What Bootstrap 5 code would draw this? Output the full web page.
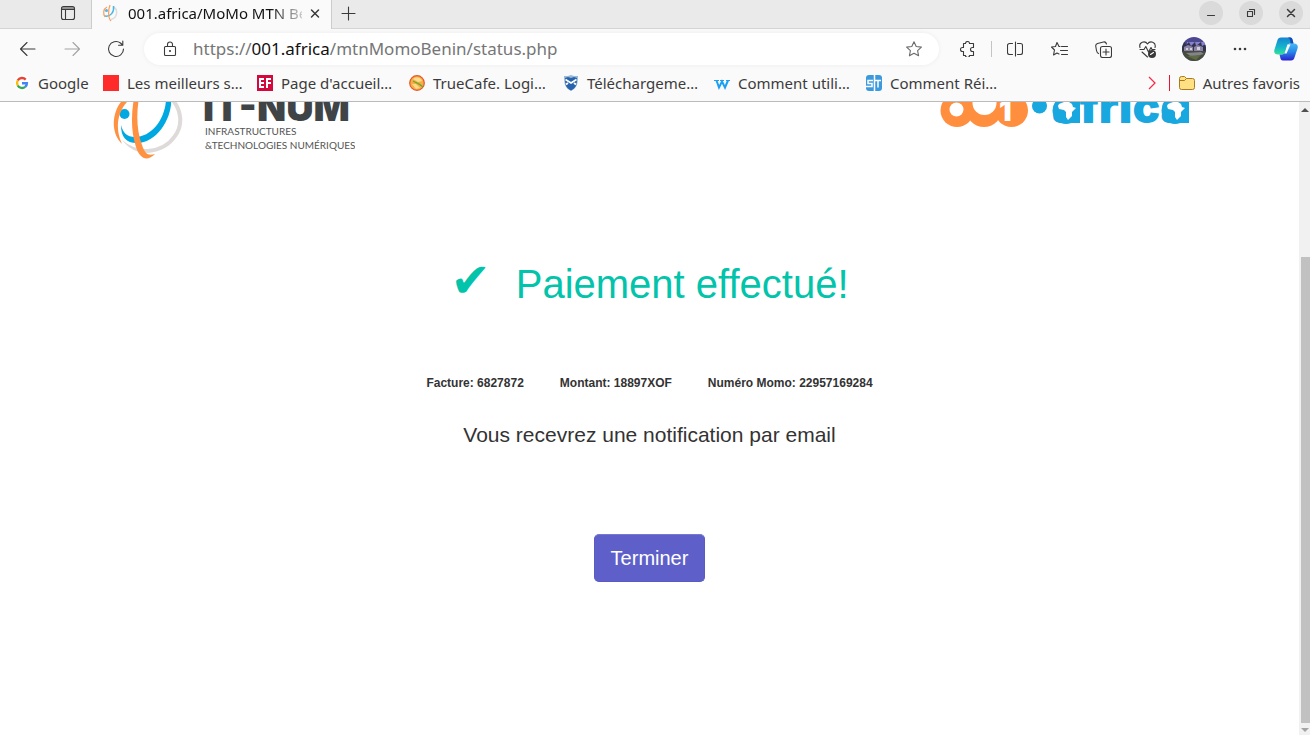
<!DOCTYPE html>
<html lang="fr">
<head>
<meta charset="utf-8">
<meta name="viewport" content="width=device-width, initial-scale=1">
<title>001.africa/MoMo MTN Bénin</title>
<link href="https://cdn.jsdelivr.net/npm/bootstrap@5.3.0/dist/css/bootstrap.min.css" rel="stylesheet">
<style>
  body { font-family: "Liberation Sans", Arial, sans-serif; color: #333; }
  .chrome { font: 15px/20px "Noto Sans", sans-serif; color: #3c3c3c; background: #fafafa; border-bottom: 1px solid #bbb; }
  .chrome button { background: none; border: 0; padding: 0; color: #3a3a3a; display: flex; align-items: center; justify-content: center; flex: none; }
  .chrome svg, .site svg, .scroller svg { display: block; flex: none; }
  .line-art { fill: none; stroke: currentColor; stroke-width: 1.1; stroke-linecap: round; stroke-linejoin: round; }
  .tabs-row { height: 29px; background: #eaeaea; border-bottom: 1px solid #d4d4d4; }
  .tab-menu { width: 46px; margin-left: 45px; height: 26px; }
  .page-tab { width: 241px; height: 29px; padding: 0 8px 3px 10px; background: #fafafa; border: solid #ccc; border-width: 0 1px; color: #111; }
  .tab-title { width: 174px; margin-left: 10px; white-space: nowrap; overflow: hidden; -webkit-mask-image: linear-gradient(90deg, #000 142px, transparent 182px); mask-image: linear-gradient(90deg, #000 142px, transparent 182px); }
  .new-tab { width: 33px; height: 26px; }
  .win-set { padding: 1px 7px 0 0; }
  .chrome .win-btn { width: 24px; height: 24px; border-radius: 50%; background: #dadada; }
  .tools { height: 40px; padding: 0 1px 0 6px; }
  .chrome .tool { width: 44px; height: 32px; }
  .chrome .tool-wide { width: 46px; height: 32px; }
  .account { margin-left: 2px; }
  .address { height: 32px; margin: 0 6px; padding: 0 17px 0 18px; border-radius: 16px; background: #fff; box-shadow: 0 0 5px #0000000f; }
  .url { font-size: 17px; line-height: 24px; color: #767676; margin-left: 15px; outline: 0; white-space: nowrap; }
  .url b { font-weight: 400; color: #111; }
  .tool-rule { width: 1px; height: 16px; background: #c4c4c4; margin: 0 1px 0 2px; }
  .marks-row { height: 32px; padding: 0 10px 4px 14px; }
  .marks { display: grid; grid-template-columns: 89px 154px 152px 154px 151px 152px auto; }
  .chrome a { color: inherit; text-decoration: none; display: flex; align-items: center; gap: 8px; white-space: nowrap; }
  .red-rule { width: 1px; height: 16px; background: #f01030; margin: 0 9px 0 13px; }
  .site-head { padding: 0 109px 0 111px; }
  .paid { font-size: 40px; line-height: 48px; color: #02c4aa; margin-top: 98px; gap: 25px; }
  .paid .tick { font-family: "DejaVu Sans", sans-serif; font-size: 48px; line-height: 40px; }
  .facts { font-size: 12px; line-height: 18px; font-weight: 700; gap: 36px; margin-top: 66px; }
  .notice { font-size: 21px; line-height: 32px; margin: 27px 0 83px; }
  .btn-done { --bs-btn-color: #fff; --bs-btn-bg: #5e5fc8; --bs-btn-border-color: #5a5ac4; --bs-btn-hover-color: #fff; --bs-btn-hover-bg: #5051b8; --bs-btn-border-radius: 5px; border-top-color: #7778d2; }
  .scroller { width: 11px; background: #f1f1f1; padding: 5px 0 3px; }
  .thumb { width: 9px; background: #c1c1c1; margin: 144px 0 5px auto; }
</style>
</head>
<body class="vh-100 d-flex flex-column overflow-hidden bg-white">
<header class="chrome">
  <div class="tabs-row d-flex align-items-start">
    <button class="tab-menu" aria-label="Menu des onglets"><svg class="line-art" width="16" height="16" viewBox="0 0 16 16"><rect x="1.500" y="1.500" width="13" height="13" rx="2"/><path d="M2 4.500h12M2 3h12M5.500 5v9"/></svg></button>
    <div class="page-tab d-flex align-items-center">
      <svg width="16" height="18" viewBox="0 0 16 18" fill="none"><path d="M11 2.500a7 7 0 0 1-2 13" stroke="#ddd" stroke-width="1.500"/><path d="M11.500 2c1 6-3 11-8.500 10" stroke="#4bb8e8" stroke-width="1.500"/><circle cx="4.500" cy="6.500" r="1.500" fill="#4bb8e8"/><path d="M5 3C1 5 1 10 3 13M8 1c-2 5-2 13 1 16" stroke="#f9a05c" stroke-width="1.200"/></svg>
      <span class="tab-title">001.africa/MoMo MTN Bénin</span>
      <button class="ms-auto" aria-label="Fermer l'onglet"><svg class="line-art" width="15" height="16" viewBox="0 0 15 16"><path d="M3.500 5l7 7m0-7l-7 7" stroke-width="1.500"/></svg></button>
    </div>
    <button class="new-tab" aria-label="Nouvel onglet"><svg class="line-art" width="15" height="15" viewBox="0 0 15 15"><path d="M7.500 1v13M1 7.500h13"/></svg></button>
    <div class="d-flex gap-3 ms-auto win-set">
      <button class="win-btn" aria-label="Réduire"><svg class="line-art" width="12" height="12" viewBox="0 0 12 12"><path d="M2.500 8.500h7"/></svg></button>
      <button class="win-btn" aria-label="Restaurer"><svg class="line-art" width="12" height="12" viewBox="0 0 12 12"><path d="M2.500 4.500h5v5h-5zM4.500 2.500h5v5"/></svg></button>
      <button class="win-btn" aria-label="Fermer"><svg class="line-art" width="12" height="12" viewBox="0 0 12 12"><path d="M2.500 2.500l7 7m0-7l-7 7" stroke-width="1.500"/></svg></button>
    </div>
  </div>
  <div class="tools d-flex align-items-center">
    <button class="tool" aria-label="Précédent"><svg class="line-art" width="18" height="16" viewBox="0 0 18 16"><path d="M8 1.500L1.500 8 8 14.500M1.500 8H16"/></svg></button>
    <button class="tool" aria-label="Suivant" disabled><svg class="line-art" width="18" height="16" viewBox="0 0 18 16" opacity=".45"><path d="M10 1.500L16.500 8 10 14.500M16.500 8H2"/></svg></button>
    <button class="tool" aria-label="Actualiser"><svg class="line-art" width="18" height="18" viewBox="0 0 18 18"><path d="M16.500 9a7.500 7.500 0 1 1-3-6l2 2M15.800 1v4.200h-4.200"/></svg></button>
    <div class="address d-flex align-items-center flex-grow-1">
      <svg class="line-art" width="16" height="16" viewBox="0 0 16 16"><rect x="2.500" y="5.500" width="11" height="9" rx="1"/><path d="M5.500 5.500V3.500a2.500 2.500 0 0 1 5 0v2"/><circle cx="8" cy="10" r=".5"/></svg>
      <div class="url flex-grow-1" role="textbox" contenteditable="true" spellcheck="false" aria-label="Adresse">https://<b>001.africa</b>/mtnMomoBenin/status.php</div>
      <button aria-label="Ajouter aux favoris"><svg class="line-art" width="16" height="16" viewBox="0 0 16 16" opacity=".75"><path d="M8 .8l2.200 4.700 5.200.6-3.800 3.500 1 5.200L8 12.200l-4.600 2.600 1-5.200L.6 6.100l5.200-.6z"/></svg></button>
    </div>
    <button class="tool" aria-label="Extensions"><svg class="line-art" width="16" height="16" viewBox="0 0 16 16"><path d="M4.500 2.500h2a2 2 0 0 1 4 0h4v4h-1a1.800 1.800 0 0 0 0 4h1v4h-4a2 2 0 0 1-4 0h-2v-4h-1a2 2 0 1 1 0-4h1z"/></svg></button>
    <span class="tool-rule"></span>
    <button class="tool" aria-label="Écran fractionné"><svg class="line-art" width="16" height="16" viewBox="0 0 16 16"><path d="M5.500 2.500h-3a2 2 0 0 0-2 2v7a2 2 0 0 0 2 2h3M8.500 1v14M10.500 2.500h3a2 2 0 0 1 2 2v7a2 2 0 0 1-2 2h-3"/></svg></button>
    <button class="tool" aria-label="Favoris"><svg class="line-art" width="17" height="16" viewBox="0 0 17 16"><path d="M9 5.500H8L6 1.500l-1.500 4-4 .5L3.500 9l-1 5L6 12l2 1M10.500 5.500h6M9.500 9.500h7M10.500 13.500h6"/></svg></button>
    <button class="tool" aria-label="Collections"><svg class="line-art" width="17" height="17" viewBox="0 0 17 17"><rect x="5.500" y="5.500" width="11" height="11" rx="2"/><path d="M11 8v6M8 11h6M3.500 12.500C2 12 1.800 11 1.500 9.500L.8 5.500C.5 4 1 3 2.500 2.500l6-1.500c1.500-.3 2.500.3 3 2"/></svg></button>
    <button class="tool" aria-label="Performances"><svg class="line-art" width="17" height="17" viewBox="0 0 17 17"><path d="M1 6.500C-.5 1 6-.8 8.500 3 11-.8 17.500 1 16 6.500M1 8.500h4l1.800-3 2.700 5.500L12 6.500l1 2h3M3 11l5.500 5"/><circle cx="13" cy="13" r="4" fill="currentColor" stroke="none"/><path d="M11.500 13.500l3-2" stroke="#fff"/></svg></button>
    <button class="tool-wide account" aria-label="Profil"><svg width="24" height="24" viewBox="0 0 24 24"><defs><clipPath id="round"><circle cx="12" cy="12" r="12"/></clipPath></defs><g clip-path="url(#round)"><path fill="#4b4790" d="M0 0h24v24H0z"/><path fill="#8a80d0" d="M5 5h19v7H5z"/><path fill="#30344a" d="M0 8l3-3 1 3 3-3 2 4 4-4 1 4 5-4 1 4 4-2v8H0z"/><path fill="#8b83a8" d="M2 10l4-2 5 2v4H2zM12 10l4-2 5 2v4h-9z"/><path fill="#d6cbd8" d="M4 11h2v2H4zM8 11h2v2H8zM15 10h3v3h-3z"/><path fill="#454d3d" d="M0 14h24v10H0z"/><path fill="#85828a" d="M4 16l15-1 3 2-12 3z"/><path fill="#5f6b43" d="M5 19l14-1-5 5z"/></g></svg></button>
    <button class="tool-wide" aria-label="Paramètres et plus"><svg width="14" height="4" viewBox="0 0 14 4" fill="currentColor"><circle cx="2" cy="2" r="1.300"/><circle cx="7" cy="2" r="1.300"/><circle cx="12" cy="2" r="1.300"/></svg></button>
    <button class="tool-wide" aria-label="Copilot"><svg width="24" height="24" viewBox="0 0 24 24"><defs><linearGradient id="cg" x2="0" y2="1"><stop stop-color="#1683d0"/><stop offset=".6" stop-color="#16b8ca"/><stop offset="1" stop-color="#35e394"/></linearGradient><linearGradient id="cb" x2="0" y2="1"><stop stop-color="#48b9f5"/><stop offset=".5" stop-color="#2687e8"/><stop offset="1" stop-color="#2b20cf"/></linearGradient></defs><path fill="url(#cg)" d="M7 .5h9c2 0 2.500 1.500 3 4l.5 2h-3c-2 0-3 1-3.500 3l-1.500 5c-.7 2-2 3-4 3H4c-3 0-4.500-2-3.500-5L3.500 3C4 1.500 5 .5 7 .5z"/><path fill="url(#cb)" d="M17 6.500h3c3 0 4.500 2 3.500 5l-3 9c-.5 2-1.500 3-3.500 3H9c-2 0-2.500-1.500-3-4l-.5-2h2c2 0 3.300-1 4-3l1.500-5c.5-2 2-3 4-3z"/><path fill="#fafafa" d="M13.500 7.500h3l-4 9h-2z"/><path fill="#1747bd" d="M14 .5h2c2 0 2.500 1.500 3.500 6h-3c0-3-.5-5-2.500-6z"/></svg></button>
  </div>
  <nav class="marks-row d-flex align-items-center" aria-label="Favoris">
    <div class="marks">
      <a href="#"><svg width="16" height="16" viewBox="0 0 16 16"><circle cx="8" cy="8" r="8" fill="#fff"/><g fill="none" stroke-width="2.400"><path stroke="#ea4335" d="M3.700 5.500A5 5 0 0 1 11.700 4.600"/><path stroke="#fbbc05" d="M3.700 5.500a5 5 0 0 0 0 5"/><path stroke="#34a853" d="M3.700 10.500a5 5 0 0 0 7.500 1.400"/><path stroke="#4285f4" d="M11.200 11.900A5 5 0 0 0 12.900 8.200H8"/></g></svg>Google</a>
      <a href="#"><svg width="16" height="16"><path fill="#ff2b2b" d="M0 0h16v16H0z"/></svg>Les meilleurs s…</a>
      <a href="#"><svg width="16" height="16" viewBox="0 0 16 16"><path fill="#d3083f" d="M0 0h16v16H0z"/><path fill="none" stroke="#fff" stroke-width="2" d="M7 4H3v8h4M3 8h4M14 4h-4v9M10 8h4"/></svg>Page d'accueil…</a>
      <a href="#"><svg width="16" height="16" viewBox="0 0 16 16"><circle cx="8" cy="8" r="7.300" fill="#f9ad45" stroke="#df5a30" stroke-width="1.200"/><path fill="#ffdc90" d="M4 4c4-3 8-1 9 2l-4 1z"/><path fill="none" stroke="#6bad31" stroke-width="1.500" d="M4 6c3 2 6 2 10 6"/><path fill="#ffd98a" d="M3 9l4 0 4 4-4 1z"/></svg>TrueCafe. Logi…</a>
      <a href="#"><svg width="16" height="16" viewBox="0 0 16 16"><path fill="#9db9d8" d="M1 1c3 0 5 0 7-1 2 1 4 1 7 1 0 8-1 12-7 15C2 13 1 9 1 1z"/><path fill="#2864ad" d="M2 3l3-1 3 1 3-1 3 1c0 7-1 10-6 12.500C3 13 2 10 2 3z"/><path fill="none" stroke="#fff" stroke-width="1.700" d="M2.500 4.500L8 8l5.500-3.500M3 9.500L5 8M13 9.500L11 8"/></svg>Téléchargeme…</a>
      <a href="#"><svg width="16" height="16" viewBox="0 0 16 16"><path fill="none" stroke="#1ca0f2" stroke-width="2" d="M2.500 5.500l2.500 7 3-6 3 6 3-7"/><path stroke="#1ca0f2" d="M0 5.500h5M6 5.500h4M12 5.500h4"/></svg>Comment utili…</a>
      <a href="#"><svg width="16" height="16" viewBox="0 0 16 16"><rect width="16" height="16" rx="3" fill="#3b9ade"/><path fill="none" stroke="#fff" stroke-width="1.500" d="M8.500 0v16M7 5.500H2v3h4v3H0M8 5.500h7M12 5.500v7"/></svg>Comment Réi…</a>
    </div>
    <button class="ms-auto" aria-label="Plus de favoris"><svg width="10" height="14" viewBox="0 0 10 14"><path fill="none" stroke="#f0304a" stroke-width="1.300" d="M3 1l6 6-6 6"/></svg></button>
    <span class="red-rule"></span>
    <a href="#"><svg width="16" height="16" viewBox="0 0 16 16"><path fill="#ffe082" stroke="#a87b20" d="M.5 3.500a2 2 0 0 1 2-2h3l2 2h6a2 2 0 0 1 2 2v7a2 2 0 0 1-2 2h-11a2 2 0 0 1-2-2z"/><path stroke="#a87b20" fill="none" d="M1 5.500h4.500l2-2"/></svg>Autres favoris</a>
  </nav>
</header>
<div class="d-flex flex-grow-1 overflow-hidden">
  <main class="site flex-grow-1">
    <div class="site-head d-flex justify-content-between align-items-start">
      <svg width="244" height="60" viewBox="111 102 244 60" role="img" aria-label="IT-NUM Infrastructures et technologies numériques">
        <path fill="none" stroke="#dedad9" stroke-width="4" d="M171 98c11 12 12 27 4 38-6 9-16 14-27 15"/>
        <path fill="#dedad9" d="M122 140q12 10 26 9v4q-16 0-26-13z"/>
        <path fill="#00a8e1" d="M166 98h5c2 18-13 45-34 45-11 0-16-6-16-18 2 8 6 12 14 12 17 0 31-19 31-39z"/>
        <circle cx="124.500" cy="114" r="5" fill="#00a8e1"/>
        <path fill="#ff9142" d="M131 98c-13 11-17 29-9 46-9-9-10-22-6-33 2-6 6-11 9-13zM134 98h5c-3 17-2 34 3 47 3 9 6 11 13 9-8 8-15 5-19-7-5-15-5-32-2-49z"/>
        <text x="203" y="121" font-family="Inter, sans-serif" font-weight="900" font-size="38" fill="#3f4447">IT-NUM</text>
        <g font-family="Lato, sans-serif" font-size="10" fill="#555"><text x="205" y="135">INFRASTRUCTURES</text><text x="205" y="149">&amp;TECHNOLOGIES NUMÉRIQUES</text></g>
      </svg>
      <svg width="250" height="28" viewBox="941 102 250 28" role="img" aria-label="001 africa">
        <g fill="#ff8f3e"><circle cx="958" cy="110.500" r="16.500"/><circle cx="985" cy="109" r="18"/><circle cx="1012.500" cy="110.500" r="16.500"/></g>
        <circle cx="957.500" cy="109.500" r="7" fill="#fff"/><circle cx="985.500" cy="103" r="12" fill="#fff"/>
        <text x="1000" y="121" font-family="Inter, sans-serif" font-weight="900" font-size="28" fill="#fff">1</text>
        <circle cx="1040.500" cy="106" r="7.500" fill="#18a7df"/>
        <text x="1053" y="123" font-family="Inter, sans-serif" font-weight="900" font-size="46" fill="#18a7df">africa</text>
        <g id="map-a"><circle cx="1067" cy="110.500" r="13.500" fill="#18a7df"/><path fill="#18a7df" d="M1070 98h11v25h-11z"/><path fill="#fff" d="M1060 104l5-2h5l3 2 1 3 3 1-4 4v4l-4 4-2-3v-5l-2-2-5-1-1-3z"/></g>
        <use href="#map-a" x="109"/>
      </svg>
    </div>
    <h1 class="paid d-flex justify-content-center mb-0 fw-normal"><span class="tick">✔</span><span>Paiement effectué!</span></h1>
    <div class="facts d-flex justify-content-center"><span>Facture: 6827872</span><span>Montant: 18897XOF</span><span>Numéro Momo: 22957169284</span></div>
    <p class="notice text-center">Vous recevrez une notification par email</p>
    <div class="text-center"><button class="btn btn-done btn-lg">Terminer</button></div>
  </main>
  <div class="scroller d-flex flex-column align-items-center" aria-hidden="true">
    <svg width="8" height="6"><path fill="#505050" d="M0 5l4-4 4 4z"/></svg>
    <div class="thumb flex-grow-1"></div>
    <svg width="8" height="4"><path fill="#a3a3a3" d="M0 0h8L4 4z"/></svg>
  </div>
</div>
<script src="https://cdn.jsdelivr.net/npm/bootstrap@5.3.0/dist/js/bootstrap.bundle.min.js"></script>
</body>
</html>
